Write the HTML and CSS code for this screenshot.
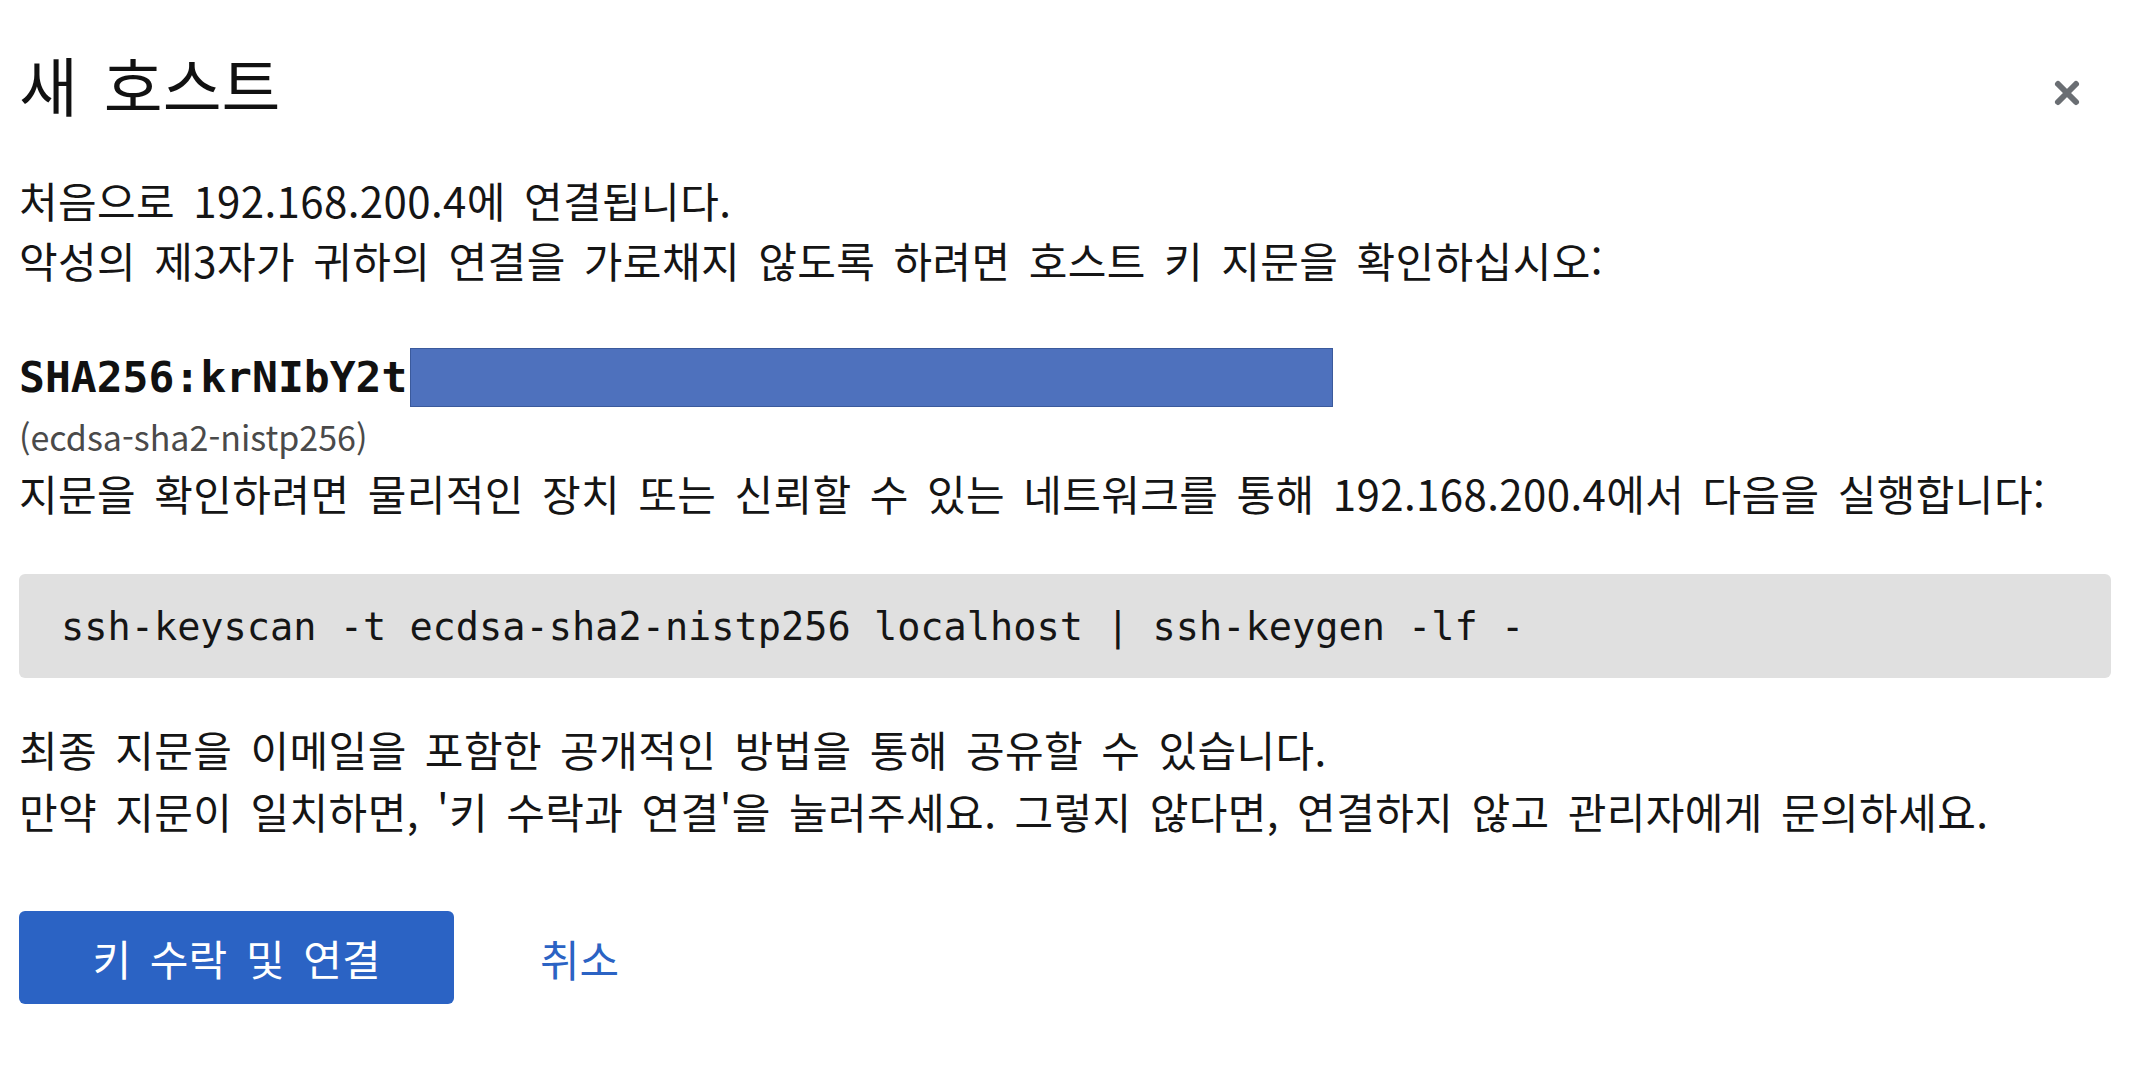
FILE: index.html
```html
<!DOCTYPE html>
<html lang="ko">
<head>
<meta charset="utf-8">
<title>새 호스트</title>
<link rel="stylesheet" href="styles.css">
</head>
<body>
<div class="dialog">
  <header class="dialog-header">
    <h1 class="dialog-title">새 호스트</h1>
    <button class="close-btn" aria-label="닫기">
      <svg width="30" height="30" viewBox="0 0 30 30"><path d="M6 6 L24 24 M24 6 L6 24" stroke="#6a6e73" stroke-width="6" stroke-linecap="round" fill="none"/></svg>
    </button>
  </header>
  <div class="dialog-body">
    <p class="text">처음으로 192.168.200.4에 연결됩니다.<br>악성의 제3자가 귀하의 연결을 가로채지 않도록 하려면 호스트 키 지문을 확인하십시오:</p>
    <div class="fingerprint">
      <span class="fp-text">SHA256:krNIbY2t</span><span class="fp-mask"></span>
    </div>
    <div class="fp-type">(ecdsa-sha2-nistp256)</div>
    <p class="text">지문을 확인하려면 물리적인 장치 또는 신뢰할 수 있는 네트워크를 통해 192.168.200.4에서 다음을 실행합니다:</p>
    <div class="code-block"><code>ssh-keyscan -t ecdsa-sha2-nistp256 localhost | ssh-keygen -lf -</code></div>
    <p class="text text-after">최종 지문을 이메일을 포함한 공개적인 방법을 통해 공유할 수 있습니다.<br>만약 지문이 일치하면, '키 수락과 연결'을 눌러주세요. 그렇지 않다면, 연결하지 않고 관리자에게 문의하세요.</p>
  </div>
  <footer class="dialog-footer">
    <button class="btn-primary">키 수락 및 연결</button>
    <button class="btn-link">취소</button>
  </footer>
</div>
</body>
</html>
```
FILE: styles.css
```css
html, body {
  margin: 0;
  padding: 0;
  background: #ffffff;
}

body {
  font-family: "Noto Sans CJK KR", "Noto Sans", sans-serif;
  color: #151515;
}

.dialog {
  padding: 48px 39px 0 19px;
}

.dialog-header {
  display: flex;
  justify-content: space-between;
  align-items: flex-start;
}

.dialog-title {
  margin: 0;
  font-size: 64px;
  line-height: 70px;
  font-weight: 400;
  word-spacing: 8px;
  color: #111111;
}

.close-btn {
  margin: 30px 29px 0 0;
  padding: 0;
  border: 0;
  background: none;
  width: 30px;
  height: 30px;
  display: flex;
}

.dialog-body {
  margin-top: 52px;
}

.text {
  margin: 0;
  font-size: 42px;
  line-height: 60px;
  word-spacing: 6px;
  letter-spacing: 0.4px;
}

.fingerprint {
  display: flex;
  align-items: center;
  height: 60px;
  margin-top: 57px;
}

.fp-text {
  font-family: "DejaVu Sans Mono", "Liberation Mono", monospace;
  font-weight: 700;
  font-size: 43px;
  line-height: 60px;
  color: #111111;
}

.fp-mask {
  display: inline-block;
  width: 921px;
  height: 57px;
  margin-left: 3px;
  background: #4e71bd;
  border: 1px solid #3b5a9c;
}

.fp-type {
  margin-top: 8px;
  font-size: 34px;
  line-height: 44px;
  color: #4a4a4a;
}

.fp-type + .text {
  margin-top: 4px;
}

.code-block {
  margin-top: 51px;
  height: 104px;
  display: flex;
  align-items: center;
  padding-left: 42px;
  background: #e0e0e0;
  border-radius: 6px;
}

.code-block code {
  font-family: "DejaVu Sans Mono", "Liberation Mono", monospace;
  font-size: 38.6px;
  color: #151515;
}

.text-after {
  margin-top: 40px;
  line-height: 62px;
}

.dialog-footer {
  display: flex;
  align-items: center;
  margin-top: 69px;
}

.btn-primary {
  width: 435px;
  height: 93px;
  border: 0;
  border-radius: 6px;
  background: #2b63c4;
  color: #ffffff;
  font-family: "Noto Sans CJK KR", "Noto Sans", sans-serif;
  font-size: 42px;
  word-spacing: 7px;
  padding: 0;
}

.btn-link {
  margin-left: 86px;
  border: 0;
  background: none;
  padding: 0;
  color: #2b63c4;
  font-family: "Noto Sans CJK KR", "Noto Sans", sans-serif;
  font-size: 43px;
}
```
